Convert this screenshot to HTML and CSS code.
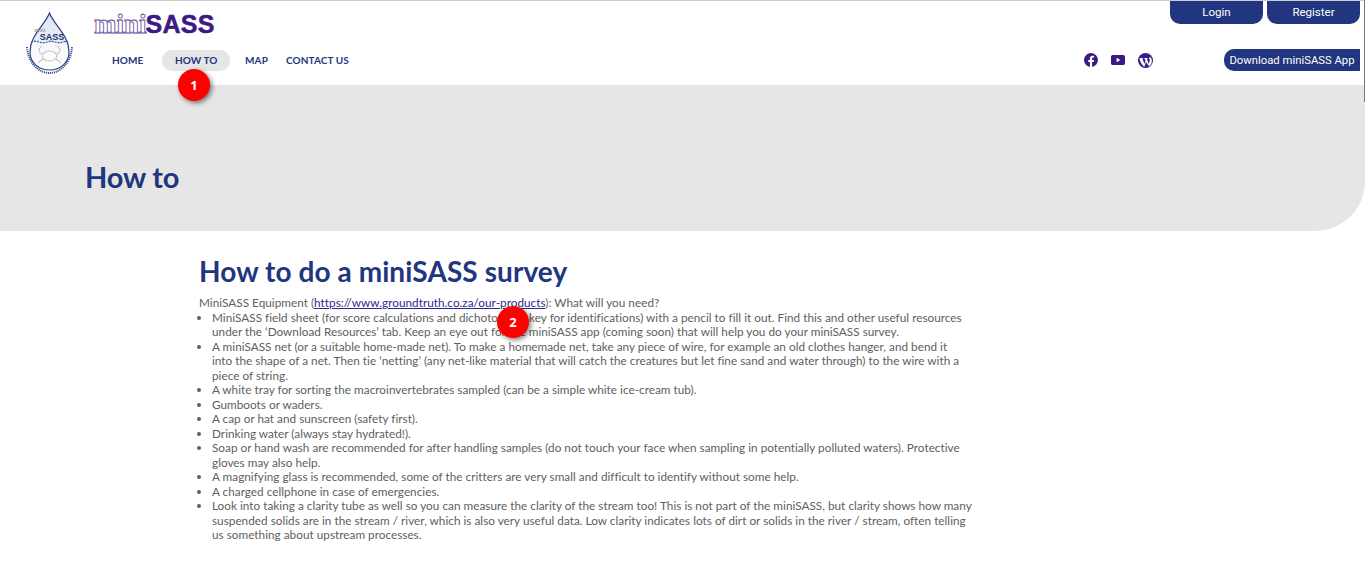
FILE: index.html
```html
<!DOCTYPE html>
<html lang="en">
<head>
    <meta charset="UTF-8">
    <meta name="viewport" content="width=device-width, initial-scale=1.0">
    <title>How to</title>
    <link rel="stylesheet" href="styles.css">
</head>
<body>
    <header class="header">
        <a class="drop-logo" href="#">
            <svg width="62" height="66" viewBox="0 0 62 66">
                <defs>
                    <linearGradient id="dropFill" x1="0" y1="0" x2="0" y2="1">
                        <stop offset="0" stop-color="#dfe5f0"/>
                        <stop offset="0.5" stop-color="#e8ecf4"/>
                        <stop offset="0.52" stop-color="#f6f7fa"/>
                        <stop offset="1" stop-color="#ffffff"/>
                    </linearGradient>
                </defs>
                <path d="M29.5 2 C34 14 49 24 49 41 C49 52 40 59 29.5 59 C19 59 10 52 10 41 C10 24 25 14 29.5 2 Z" fill="url(#dropFill)" stroke="#27407f" stroke-width="1.2"/>
                <path d="M11 31 Q15 29.5 19 31 T27 31 T35 31 T43 31 T48 31" fill="none" stroke="#3b62a8" stroke-width="1.3" stroke-dasharray="2 1"/>
                <text x="32" y="28.5" class="drop-sass">SASS</text>
                <text x="20" y="21" class="drop-mini">mini</text>
                <g fill="none" stroke="#a5a5a5" stroke-width="1.1" stroke-dasharray="1.2 0.8">
                    <ellipse cx="29.5" cy="45" rx="7" ry="5"/>
                    <path d="M22 43 C18 41 18 37 22 35"/>
                    <path d="M37 43 C41 41 41 37 37 35"/>
                    <path d="M23 48 L18 52"/>
                    <path d="M36 48 L41 52"/>
                </g>
                <path d="M7 36 C8 51 18 62 29.5 62 C41 62 51 51 52 36" fill="none" stroke="#3a5590" stroke-width="2" stroke-dasharray="1.2 0.8"/>
            </svg>
        </a>
        <div class="brand-nav">
            <div class="wordmark"><span class="wordmark-mini">mini</span><span class="wordmark-sass">SASS</span></div>
            <nav class="main-nav">
                <a href="#">HOME</a>
                <a href="#" class="active">HOW TO</a>
                <a href="#">MAP</a>
                <a href="#" class="contact-link">CONTACT US</a>
            </nav>
        </div>
        <div class="header-right">
            <div class="auth-buttons">
                <a href="#" class="auth-btn">Login</a>
                <a href="#" class="auth-btn">Register</a>
            </div>
            <div class="social-row">
                <div class="social-icons">
                    <svg width="14" height="14" viewBox="0 0 14 14"><path fill="#3b1a84" d="M14 7a7 7 0 1 0-8.1 6.9V9H4.2V7h1.7V5.5c0-1.8 1-2.7 2.6-2.7.8 0 1.6.1 1.6.1v1.7h-.9c-.9 0-1.1.5-1.1 1.1V7h1.9l-.3 2H8.1v4.9A7 7 0 0 0 14 7z"/></svg>
                    <svg width="14" height="14" viewBox="0 0 14 14"><path fill="#3b1a84" d="M12.2 2H1.8C.8 2 0 2.8 0 3.8v6.4c0 1 .8 1.8 1.8 1.8h10.4c1 0 1.8-.8 1.8-1.8V3.8c0-1-.8-1.8-1.8-1.8zM5.6 9.2V4.8L9.4 7 5.6 9.2z"/></svg>
                    <svg width="15" height="15" viewBox="0 0 15 15">
                        <circle cx="7.5" cy="7.5" r="7.5" fill="#3b1a84"/>
                        <path fill="#fff" d="M1.6 4.9h3.7v.5l-.9.1 2 5.6 1.1-3.3-.8-2.3-.7-.1v-.5h3.7v.5l-.9.1 2 5.5.6-1.9c.3-.9.4-1.5.4-2 0-.8-.7-1.5-1-1.9h-.1c.9-.9 1.9-.9 1.9-.9l.6.9c.5.9.7 1.9.7 2.8 0 2-.9 3.7-2.6 5l-.3.2L8 8.9l-1.5 4.5-.2.3C4 12 1.6 8 1.6 4.9z" opacity="0.98"/>
                    </svg>
                </div>
                <a href="#" class="download-btn">Download miniSASS App</a>
            </div>
        </div>
    </header>

    <section class="hero">
        <h1>How to</h1>
    </section>

    <main class="content">
        <h2>How to do a miniSASS survey</h2>
        <p>MiniSASS Equipment (<a href="#">https://www.groundtruth.co.za/our-products</a>): What will you need?</p>
        <ul>
            <li>MiniSASS field sheet (for score calculations and dichotomous key for identifications) with a pencil to fill it out. Find this and other useful resources under the ‘Download Resources’ tab. Keep an eye out for the miniSASS app (coming soon) that will help you do your miniSASS survey.</li>
            <li>A miniSASS net (or a suitable home-made net). To make a homemade net, take any piece of wire, for example an old clothes hanger, and bend it<br>into the shape of a net. Then tie ‘netting’ (any net-like material that will catch the creatures but let fine sand and water through) to the wire with a<br>piece of string.</li>
            <li>A white tray for sorting the macroinvertebrates sampled (can be a simple white ice-cream tub).</li>
            <li>Gumboots or waders.</li>
            <li>A cap or hat and sunscreen (safety first).</li>
            <li>Drinking water (always stay hydrated!).</li>
            <li>Soap or hand wash are recommended for after handling samples (do not touch your face when sampling in potentially polluted waters). Protective gloves may also help.</li>
            <li>A magnifying glass is recommended, some of the critters are very small and difficult to identify without some help.</li>
            <li>A charged cellphone in case of emergencies.</li>
            <li>Look into taking a clarity tube as well so you can measure the clarity of the stream too! This is not part of the miniSASS, but clarity shows how many suspended solids are in the stream / river, which is also very useful data. Low clarity indicates lots of dirt or solids in the river / stream, often telling us something about upstream processes.</li>
        </ul>
    </main>

    <div class="step-badge step-one">1</div>
    <div class="step-badge step-two">2</div>
    <div class="page-edge"></div>
</body>
</html>
```

FILE: styles.css
```css
html {
    overflow: hidden;
}
body {
    font-family: Lato, "Open Sans", sans-serif;
    margin: 0;
    padding: 0;
    height: 565px;
    overflow: hidden;
    background-color: white;
    color: #606060;
}
a {
    text-decoration: none;
}
.header {
    display: flex;
    height: 84px;
    border-top: 1px solid #cccccc;
    box-sizing: content-box;
}
.drop-logo {
    width: 62px;
    margin: 10px 0 0 20px;
}
.drop-sass {
    font-family: "Liberation Sans", sans-serif;
    font-size: 9px;
    font-weight: bold;
    fill: #1f2f6e;
    text-anchor: middle;
}
.drop-mini {
    font-family: "Liberation Serif", serif;
    font-size: 6px;
    fill: #888888;
    text-anchor: middle;
}
.brand-nav {
    margin-left: 12px;
    display: flex;
    flex-direction: column;
}
.wordmark {
    display: flex;
    align-items: baseline;
    height: 38px;
    padding-top: 8px;
    box-sizing: border-box;
    color: #3b1a84;
    line-height: 30px;
}
.wordmark-mini {
    font-family: "Liberation Serif", serif;
    font-size: 27px;
    font-weight: bold;
    color: white;
    -webkit-text-stroke: 0.8px #5b3f9c;
}
.wordmark-sass {
    font-family: "Liberation Sans", sans-serif;
    font-size: 25px;
    font-weight: bold;
    letter-spacing: 0.3px;
    margin-left: -1px;
    -webkit-text-stroke: 0.5px #3b1a84;
}
.main-nav {
    display: flex;
    align-items: center;
    height: 21px;
    margin-top: 11px;
    padding-left: 8px;
}
.main-nav a {
    font-size: 10px;
    font-weight: bold;
    letter-spacing: 0.1px;
    color: #21367f;
    padding: 0 10px;
    line-height: 21px;
    border-radius: 10px;
}
.main-nav a.active {
    background-color: #e6e6e6;
    padding: 0 12.5px;
    margin: 0 5px 0 9px;
}
.main-nav a.contact-link {
    margin-left: -2px;
}
.header-right {
    margin-left: auto;
    width: 290px;
    margin-right: 5px;
    display: flex;
    flex-direction: column;
}
.auth-buttons {
    display: flex;
    justify-content: flex-end;
    gap: 4px;
}
.auth-btn {
    width: 93px;
    height: 23px;
    line-height: 22px;
    text-align: center;
    font-family: Roboto, sans-serif;
    font-size: 11.5px;
    color: white;
    background-color: #21367f;
    border-radius: 0 0 10px 10px;
}
.social-row {
    display: flex;
    align-items: center;
    justify-content: space-between;
    margin-top: 25px;
}
.social-icons {
    display: flex;
    align-items: center;
    gap: 13px;
    margin-left: 14px;
}
.download-btn {
    width: 136px;
    height: 22px;
    line-height: 23px;
    text-align: center;
    font-family: Roboto, sans-serif;
    font-size: 11.3px;
    color: white;
    background-color: #21367f;
    border-radius: 10px 0 0 10px;
}
.hero {
    height: 146px;
    background-color: #e6e6e6;
    border-bottom-right-radius: 50px;
    display: flex;
    align-items: center;
    padding: 36px 0 0 85px;
    box-sizing: border-box;
}
.hero h1 {
    margin: 0;
    font-size: 29px;
    letter-spacing: -0.2px;
    font-weight: bold;
    color: #21367f;
}
.content {
    width: 775px;
    margin-left: 199px;
    font-size: 11.75px;
    letter-spacing: 0.02px;
    line-height: 14.5px;
}
.content h2 {
    margin: 23px 0 8px;
    font-size: 28px;
    letter-spacing: 0.08px;
    line-height: 34px;
    font-weight: bold;
    color: #21367f;
}
.content p {
    margin: 0;
}
.content p a {
    color: #2d2a8c;
    text-decoration: underline;
}
.content ul {
    margin: 0;
    padding-left: 13px;
}
.step-badge {
    position: absolute;
    width: 32px;
    height: 32px;
    line-height: 32px;
    text-align: center;
    border-radius: 50%;
    background-color: #ff0000;
    color: white;
    font-family: "Open Sans", sans-serif;
    font-size: 13px;
    font-weight: bold;
    box-shadow: 2px 2px 5px rgba(0, 0, 0, 0.5);
}
.step-one {
    left: 178px;
    top: 69px;
}
.step-two {
    left: 497px;
    top: 306px;
}
.page-edge {
    position: absolute;
    left: 1364px;
    top: 0;
    width: 1px;
    height: 102px;
    background-color: #777777;
}
```
